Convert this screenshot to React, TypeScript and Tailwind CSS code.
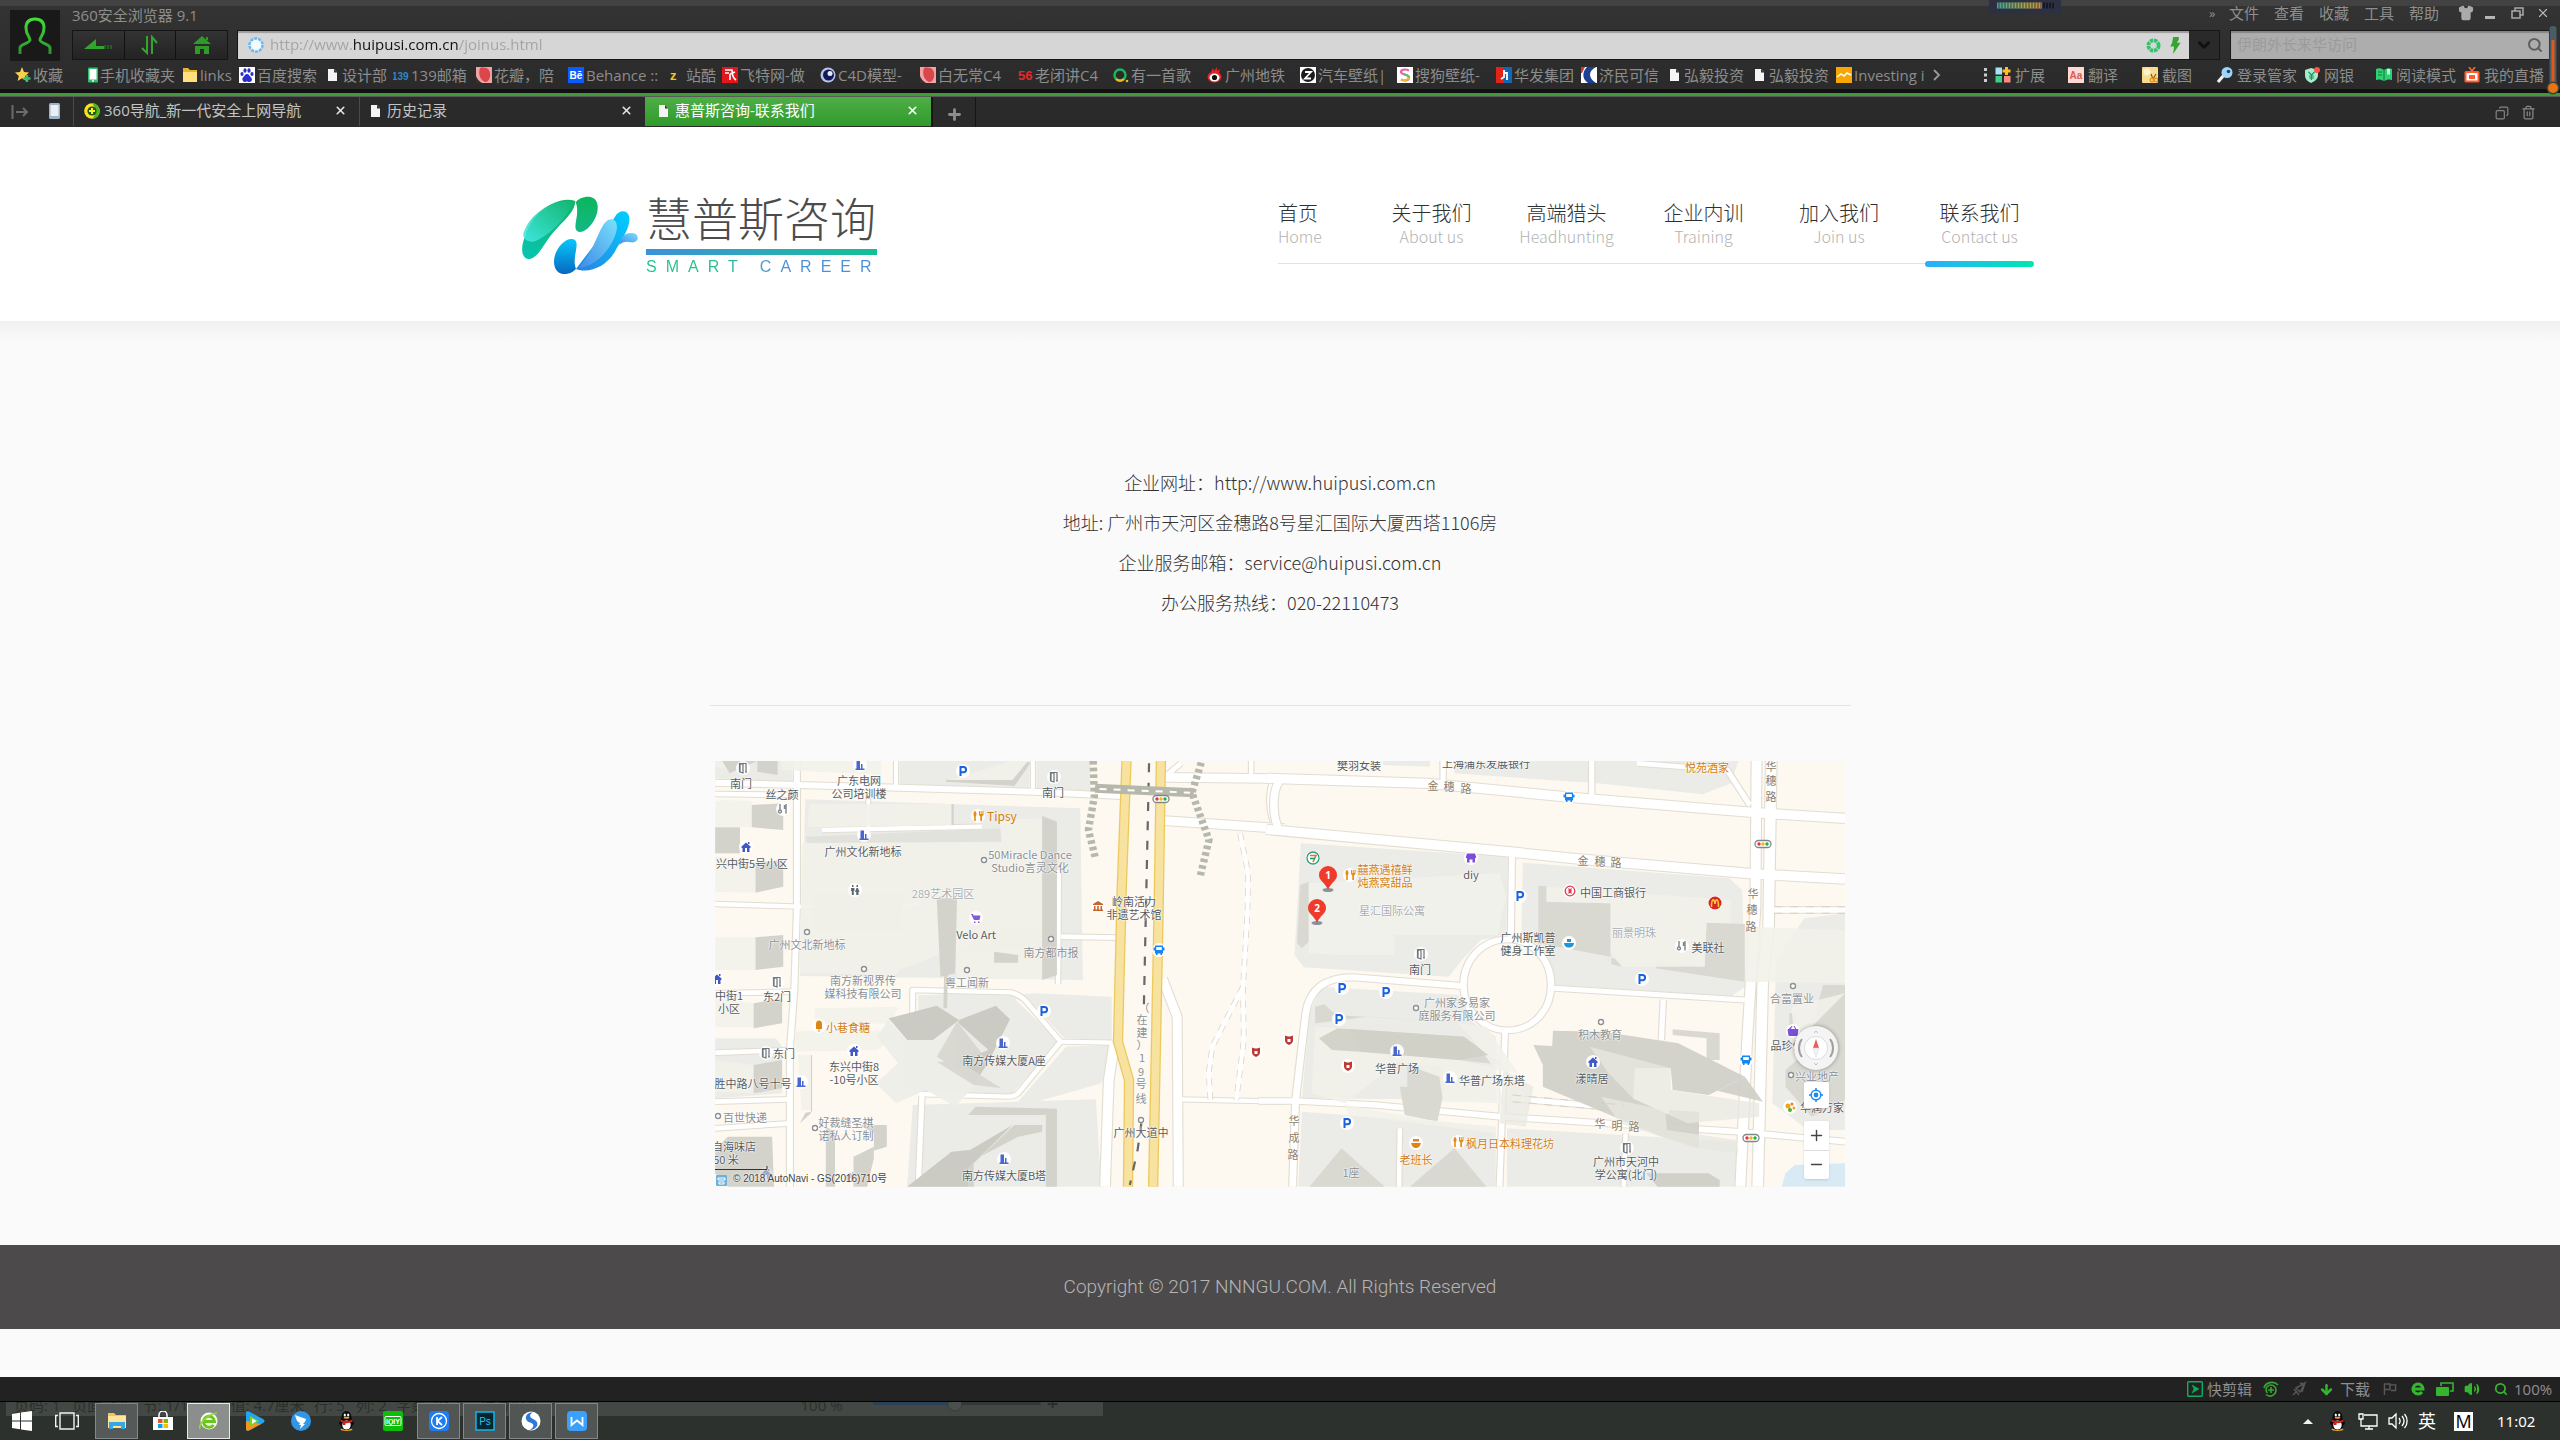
import React from "react";
import {
  ArrowDown,
  ChevronDown,
  Copy,
  Search,
  Shirt,
  Trash2,
  Volume2,
  X,
  Plus,
  Minus,
} from "lucide-react";

/* ------------------------------------------------------------------ */
/* Bookmark and tab icons                                              */
/* ------------------------------------------------------------------ */

function PageGlyph() {
  return (
    <svg viewBox="0 0 11 14" className="mr-[2px] h-[14px] w-[11px] shrink-0">
      <path d="M1 1h6l3 3.500V13H1z" fill="#f4f4f4" />
      <path d="M7 1v3.500h3z" fill="#333" />
    </svg>
  );
}

function PhoneGlyph() {
  return (
    <svg viewBox="0 0 10 16" className="h-4 w-[10px] shrink-0">
      <rect y="0.500" width="10" height="15" rx="1" fill="#2ebd6b" />
      <rect x="1.500" y="2" width="7" height="10.500" fill="#fff" />
      <circle cx="5" cy="14" r="0.900" fill="#fff" />
    </svg>
  );
}

function Glyph({ kind }: { kind: string }) {
  if (kind === "page") return <PageGlyph />;
  if (kind === "phone") return <PhoneGlyph />;
  return (
    <svg viewBox="0 0 16 16" className="h-4 w-4 shrink-0">
      {kind === "star" && (
        <>
          <path d="M7 0l2 5 5 .5-3.8 3.4L11.400 14 7 11.300 2.600 14l1.200-5.100L0 5.500 5 5z" fill="#fbd04e" />
          <path d="M12 8v7M8.500 11.500h7" stroke="#35c06b" strokeWidth="2.400" />
        </>
      )}
      {kind === "folder" && (
        <>
          <path d="M1 1h5l2 2h7v12H1z" fill="#e8b32e" />
          <path d="M1 5h14v10H1z" fill="#ffe07c" />
        </>
      )}
      {kind === "paw" && (
        <>
          <rect width="16" height="16" fill="#fff" />
          <g fill="#2b2fd0">
            <ellipse cx="3" cy="7" rx="1.600" ry="2.100" />
            <ellipse cx="6" cy="3.500" rx="1.600" ry="2.200" />
            <ellipse cx="10" cy="3.500" rx="1.600" ry="2.200" />
            <ellipse cx="13" cy="7" rx="1.600" ry="2.100" />
            <path d="M8 7c2 0 2.500 2 4 3.500S13 15 10.500 15 9 14.500 8 14.500 7 15 5.500 15 2.500 12 4 10.500 6 7 8 7z" />
          </g>
        </>
      )}
      {kind === "139" && (
        <text x="-1" y="13" fontSize="10" fontWeight="700" fill="#2f86c9" fontFamily="Liberation Sans">139</text>
      )}
      {kind === "petal" && (
        <>
          <rect width="16" height="16" fill="#f0a3a3" />
          <path d="M4 1c8-2 11 3 10 9-1 4-3 5-5 5-5-2-7-8-5-14z" fill="#d9464c" />
          <path d="M0 9v7h6C3 14 1 12 0 9z" fill="#3a2f30" />
        </>
      )}
      {kind === "be" && (
        <>
          <rect width="16" height="16" fill="#0d5bff" />
          <text x="1.500" y="12" fontSize="10" fontWeight="700" fill="#fff" fontFamily="Liberation Sans">Bē</text>
        </>
      )}
      {kind === "z" && (
        <text x="2" y="13" fontSize="13" fontWeight="700" fill="#f2c81c" fontFamily="Liberation Sans">z</text>
      )}
      {kind === "fei" && (
        <>
          <rect width="16" height="16" fill="#e3161b" />
          <path d="M3 3h7c0 5 1 8 4 10M8 7l5-2M8 7v6M3 6h4" stroke="#fff" strokeWidth="1.600" fill="none" />
        </>
      )}
      {kind === "c4d" && (
        <>
          <circle cx="8" cy="8" r="7.500" fill="#b9c4e6" />
          <circle cx="8.500" cy="8" r="5.500" fill="#10185c" />
          <circle cx="10" cy="6.500" r="2.500" fill="#e8ecf8" />
        </>
      )}
      {kind === "56" && (
        <text x="1" y="13" fontSize="13" fontWeight="700" fill="#e22a2a" fontFamily="Liberation Sans">56</text>
      )}
      {kind === "q" && (
        <>
          <circle cx="7" cy="8" r="5.500" fill="none" stroke="#1fb35a" strokeWidth="2.500" />
          <path d="M3 12a5.500 5.500 0 0 0 8 0" stroke="#f4b41b" strokeWidth="2.500" fill="none" />
          <circle cx="14" cy="14" r="1.300" fill="#f4b41b" />
        </>
      )}
      {kind === "weibo" && (
        <>
          <ellipse cx="7.500" cy="10" rx="7" ry="5.500" fill="#e0262b" />
          <path d="M4 5l2-4 1 3 3-4v4l3-2-1 4z" fill="#e0262b" />
          <ellipse cx="7.500" cy="10.500" rx="5" ry="4" fill="#fff" />
          <circle cx="7.500" cy="10.500" r="2.600" fill="#111" />
        </>
      )}
      {kind === "zcircle" && (
        <>
          <rect width="16" height="16" fill="#fff" />
          <circle cx="8" cy="8" r="7" fill="#1c1c1c" />
          <path d="M5 5h6l-6 6.500h6" stroke="#fff" strokeWidth="1.800" fill="none" />
        </>
      )}
      {kind === "sogou" && (
        <>
          <rect width="16" height="16" fill="#fff" />
          <path d="M12 3.500C9 2 4 2 4 5s8 2 8 5.500-5 3.500-8 2" stroke="#ef5da8" strokeWidth="2.200" fill="none" />
          <path d="M12 9.500c.5 4-5 4-8 3" stroke="#f3b52b" strokeWidth="2.200" fill="none" />
          <path d="M7 7.500c3 .5 5 1 5 3" stroke="#59c36a" strokeWidth="2.200" fill="none" />
        </>
      )}
      {kind === "huafa" && (
        <>
          <rect width="8" height="16" fill="#e2231a" />
          <rect x="8" width="8" height="16" fill="#1468b3" />
          <path d="M5 12l3-2V3M8 6h3v7" stroke="#fff" strokeWidth="1.800" fill="none" />
        </>
      )}
      {kind === "jimin" && (
        <>
          <rect width="16" height="16" fill="#fff" />
          <path d="M6 0h9c-8 4-8 11 0 16H7C1 12 1 5 6 0z" fill="#1d3f94" />
          <path d="M0 0h4L1 6H0z" fill="#d83a2a" />
        </>
      )}
      {kind === "invest" && (
        <>
          <rect width="16" height="16" fill="#f9a602" />
          <path d="M1 10l4-3 3 2 3-3 4 2" stroke="#fff" strokeWidth="1.500" fill="none" />
        </>
      )}
      {kind === "grid" && (
        <>
          <rect x="0.500" y="0.500" width="6.500" height="7" fill="#a7e2f8" />
          <path d="M11.500 0v8M7.500 4h8" stroke="#fbc01d" strokeWidth="3" />
          <rect x="0.500" y="9" width="6.500" height="6.500" fill="#3ccf88" />
          <rect x="9" y="9" width="6.500" height="6.500" fill="#ff8a80" />
        </>
      )}
      {kind === "aa" && (
        <>
          <rect width="16" height="16" fill="#ffd9d4" />
          <text x="1.500" y="12" fontSize="10" fontWeight="700" fill="#dc5a55" fontFamily="Liberation Sans">Aa</text>
        </>
      )}
      {kind === "cut" && (
        <>
          <rect width="16" height="16" rx="1" fill="#f8dc8f" />
          <circle cx="5" cy="5" r="3.500" fill="#fff3cc" />
          <path d="M9 7l2 5M14 7l-3 5" stroke="#7b5a1c" strokeWidth="1.200" />
          <circle cx="10" cy="13" r="1.800" fill="none" stroke="#ef9020" strokeWidth="1.400" />
          <circle cx="14" cy="13" r="1.800" fill="none" stroke="#ef9020" strokeWidth="1.400" />
        </>
      )}
      {kind === "key" && (
        <>
          <path d="M1 15l6-7" stroke="#f0f0f0" strokeWidth="3" />
          <circle cx="10" cy="5.500" r="5.500" fill="#9fd5fa" />
          <circle cx="11.500" cy="4.500" r="1.800" fill="#23445e" />
        </>
      )}
      {kind === "shield" && (
        <>
          <path d="M1 3l6-2 7 2v5c0 4-3 6-7 8-4-2-6-4-6-8z" fill="#a5ecca" />
          <path d="M4.500 5l3 3 3-3M7.500 8v5M5 9h5M5 11h5" stroke="#159a5c" strokeWidth="1.200" fill="none" />
          <circle cx="13" cy="3" r="3" fill="#ff5348" />
        </>
      )}
      {kind === "book" && (
        <>
          <path d="M0 2c3-1.500 5-1 8 1 3-2 5-2.500 8-1v11c-3-1-5-.5-8 1-3-1.500-5-2-8-1z" fill="#2fcf73" />
          <path d="M8 3v11M2 5h4M2 8h4" stroke="#15743d" strokeWidth="1" />
          <path d="M11 2v6l1.500-1L14 8V2z" fill="#c7f7dd" />
        </>
      )}
      {kind === "tv" && (
        <>
          <path d="M5 0l3 4 3-4" stroke="#ff6a2c" strokeWidth="1.600" fill="none" />
          <rect x="0.500" y="4" width="15" height="11.500" rx="1.500" fill="#ff5b2e" />
          <rect x="2.500" y="6" width="11" height="7.500" fill="#fff" />
          <rect x="5" y="8" width="6" height="4" fill="#ff5b2e" />
        </>
      )}
      {kind === "360" && (
        <>
          <circle cx="8" cy="8" r="7.800" fill="#fce21c" />
          <path d="M8 .2a7.800 7.800 0 0 1 0 15.600C12 13 12 4 8 .2z" fill="#52b51f" />
          <circle cx="8" cy="8" r="4.600" fill="#1e5a12" />
          <path d="M8 5v6M5 8h6" stroke="#fbea30" strokeWidth="2" />
        </>
      )}
    </svg>
  );
}

const bookmarks = [
  { t: "收藏", k: "star", w: "w-[73px]" },
  { t: "手机收藏夹", k: "phone", w: "w-[94px]" },
  { t: "links", k: "folder", w: "w-[57px]" },
  { t: "百度搜索", k: "paw", w: "w-[88px]" },
  { t: "设计部", k: "page", w: "w-[66px]" },
  { t: "139邮箱", k: "139", w: "w-[83px]" },
  { t: "花瓣，陪", k: "petal", w: "w-[92px]" },
  { t: "Behance ::", k: "be", w: "w-[100px]" },
  { t: "站酷", k: "z", w: "w-[54px]" },
  { t: "飞特网-做", k: "fei", w: "w-[98px]" },
  { t: "C4D模型-", k: "c4d", w: "w-[100px]" },
  { t: "白无常C4", k: "petal", w: "w-[97px]" },
  { t: "老闭讲C4", k: "56", w: "w-[96px]" },
  { t: "有一首歌", k: "q", w: "w-[94px]" },
  { t: "广州地铁", k: "weibo", w: "w-[93px]" },
  { t: "汽车壁纸|", k: "zcircle", w: "w-[97px]" },
  { t: "搜狗壁纸-", k: "sogou", w: "w-[99px]" },
  { t: "华发集团", k: "huafa", w: "w-[85px]" },
  { t: "济民可信", k: "jimin", w: "w-[88px]" },
  { t: "弘毅投资", k: "page", w: "w-[85px]" },
  { t: "弘毅投资", k: "page", w: "w-[82px]" },
  { t: "Investing i", k: "invest", w: "w-[97px]" },
];

const extensions = [
  { t: "扩展", k: "grid", w: "w-[73px]" },
  { t: "翻译", k: "aa", w: "w-[74px]" },
  { t: "截图", k: "cut", w: "w-[75px]" },
  { t: "登录管家", k: "key", w: "w-[87px]" },
  { t: "网银", k: "shield", w: "w-[72px]" },
  { t: "阅读模式", k: "book", w: "w-[88px]" },
  { t: "我的直播", k: "tv", w: "w-[84px]" },
];

/* ------------------------------------------------------------------ */
/* Browser chrome                                                      */
/* ------------------------------------------------------------------ */

function TopBar() {
  return (
    <div className="flex h-[62px] pl-[10px] pr-[10px]">
      <button aria-label="账户" className="mt-[10px] flex h-[51px] w-[50px] shrink-0 items-center justify-center bg-[#191919]">
        <svg viewBox="0 0 34 38" className="h-[38px] w-[34px]" fill="none" stroke="url(#avatarGreen)" strokeWidth="3">
          <defs>
            <linearGradient id="avatarGreen" x1="0" y1="0" x2="0" y2="1">
              <stop offset="0" stopColor="#3fe03a" />
              <stop offset="1" stopColor="#2f8f2c" />
            </linearGradient>
          </defs>
          <path d="M2 37v-6c0-4 9-4 10-8 0-3-4-5-4-12C8 5 11 2 17 2s9 3 9 9c0 7-4 9-4 12 1 4 10 4 10 8v6" />
        </svg>
      </button>
      <div className="min-w-0 flex-1 pl-3">
        <div className="flex h-[30px] items-center justify-between text-[15px] text-[#8e8e8e]">
          <span className="leading-5">360安全浏览器 9.1</span>
          <div className="flex h-5 items-center pb-1 leading-5">
            <span className="w-5 text-[13px]">»</span>
            <button className="w-[45px] text-left">文件</button>
            <button className="w-[45px] text-left">查看</button>
            <button className="w-[45px] text-left">收藏</button>
            <button className="w-[45px] text-left">工具</button>
            <button className="w-[49px] text-left">帮助</button>
            <button aria-label="皮肤" className="w-[27px]"><Shirt size={16} fill="#aaa" color="#aaa" /></button>
            <button aria-label="最小化" className="mt-2 mr-4 h-[3px] w-[10px] bg-[#b5b5b5]" />
            <button aria-label="还原" className="w-[25px]">
              <svg viewBox="0 0 13 12" className="h-3 w-[13px]" fill="none" stroke="#aaa" strokeWidth="1.500">
                <path d="M4 4V1h8v7H9M1 4h8v7H1z" />
              </svg>
            </button>
            <button aria-label="关闭"><X size={14} color="#bbb" /></button>
          </div>
        </div>
        <div className="flex h-[30px] items-center">
          <div className="mr-[9px] flex h-[30px] w-[156px] shrink-0 divide-x divide-[#111] border border-[#151515] bg-linear-to-b from-[#333] to-[#232323]">
            <button aria-label="后退" className="flex flex-1 items-center justify-center">
              <svg viewBox="0 0 28 12" className="h-3 w-7"><path d="M0 10L12 0v7h8v3z" fill="#33a52c" /><path d="M21 10v-4M24 10v-4M27 10v-4" stroke="#2a6f28" strokeWidth="1.500" /></svg>
            </button>
            <button aria-label="刷新" className="flex flex-1 items-center justify-center">
              <svg viewBox="0 0 18 20" className="h-5 w-[18px]" fill="none" stroke="#33a52c" strokeWidth="2"><path d="M6 1v17L1 13M11 19V2l5 6" /></svg>
            </button>
            <button aria-label="主页" className="flex flex-1 items-center justify-center">
              <svg viewBox="0 0 20 18" className="h-[18px] w-5"><path d="M10 0l9 8H1zM3 10h14v8h-5v-5H8v5H3zM14 1h2v3h-2z" fill="#2f9a2a" /></svg>
            </button>
          </div>
          <div className="flex h-[30px] min-w-0 flex-1 items-center border border-[#161616] bg-[#d6d6d6] pl-[10px] shadow-[inset_0_2px_1px_#9c9c9c]">
            <svg viewBox="0 0 16 16" className="mr-[6px] h-4 w-4 shrink-0"><circle cx="8" cy="8" r="6.500" fill="#f4fbff" stroke="#6bb8f0" strokeWidth="2.500" strokeDasharray="3 1" /></svg>
            <input
              aria-label="地址"
              defaultValue="http://www.huipusi.com.cn/joinus.html"
              className="h-6 min-w-0 flex-1 bg-[linear-gradient(90deg,#a3a3a3_83px,#111_83px,#111_189px,#a3a3a3_189px)] bg-clip-text pb-[2px] text-[15px] text-transparent outline-none"
            />
            <svg viewBox="0 0 16 16" className="mr-2 h-[15px] w-[15px] shrink-0"><circle cx="8" cy="8" r="5.500" fill="none" stroke="#2fc56c" strokeWidth="4" strokeDasharray="3.500 0.800" /></svg>
            <svg viewBox="0 0 12 18" className="mr-2 h-[17px] w-3 shrink-0"><path d="M4 0h6v3L8 6h4L4 18l1-8H1l2-4z" fill="#35a52f" /></svg>
            <button aria-label="展开" className="flex h-7 w-[30px] shrink-0 items-center justify-center bg-[#2a2a2a]">
              <ChevronDown size={18} strokeWidth={4} color="#111" />
            </button>
          </div>
          <div className="ml-[10px] flex h-[30px] w-[320px] shrink-0 items-center border border-[#1a1a1a] bg-[#adadad] px-[6px] shadow-[inset_0_2px_1px_#858585]">
            <input aria-label="搜索" placeholder="伊朗外长来华访问" className="min-w-0 flex-1 pb-[2px] text-[15px] outline-none placeholder:text-[#9b9b9b]" />
            <button aria-label="搜索"><Search size={16} strokeWidth={3} color="#5f5f5f" /></button>
          </div>
        </div>
      </div>
    </div>
  );
}

function Tab({ icon, title, active }: { icon: string; title: string; active?: boolean }) {
  return (
    <div
      role="tab"
      aria-selected={!!active}
      className={
        active
          ? "flex h-[29px] w-[286px] items-center bg-linear-to-b from-[#4fae47] to-[#2f9a2b] pr-3 pb-[2px] pl-[13px] text-white"
          : "flex h-[29px] w-[286px] items-center border-l border-[#4a4a4a] pr-3 pb-[2px] pl-[10px] text-[#c4c4c4]"
      }
    >
      <Glyph kind={icon} />
      <span className="ml-1 flex-1 truncate text-[15px]">{title}</span>
      <button aria-label="关闭标签"><X size={13} strokeWidth={3} color={active ? "#fff" : "#e6e6e6"} /></button>
    </div>
  );
}

function BrowserChrome() {
  return (
    <div className="relative h-[127px] shrink-0 overflow-hidden bg-linear-to-b from-[#343434] to-[#262626]">
      <div className="h-[6px] bg-[#424242]" />
      <div className="-mt-[6px]"><TopBar /></div>
      <div className="flex h-[31px] items-center justify-between border-b-4 border-[#111] pr-3 pb-[2px] pl-[15px] text-[15px] leading-5 whitespace-nowrap text-[#8c8c8c]">
        <nav aria-label="书签" className="flex items-center">
          {bookmarks.map((b, i) => (
            <a key={i} href="#" className={`flex shrink-0 items-center gap-[2px] ${b.w}`}>
              <Glyph kind={b.k} />
              {b.t}
            </a>
          ))}
          <svg viewBox="0 0 8 12" className="h-3 w-2" fill="none" stroke="#999" strokeWidth="1.800"><path d="M1 1l5 5-5 5" /></svg>
        </nav>
        <div className="flex items-center">
          <svg viewBox="0 0 3 14" className="mr-2 h-[14px] w-[3px]" fill="#ccc"><path d="M0 0h3v3H0zM0 5.500h3v3H0zM0 11h3v3H0z" /></svg>
          {extensions.map((b) => (
            <button key={b.t} className={`flex shrink-0 items-center gap-1 ${b.w}`}>
              <Glyph kind={b.k} />
              {b.t}
            </button>
          ))}
        </div>
      </div>
      <div className="h-1 border-b border-[#5a5a5a] bg-[#3d9a37]" />
      <div className="flex h-[30px] items-start bg-[#2a2a2a]">
        <button aria-label="侧栏" className="mt-2 ml-[11px] w-[38px]">
          <svg viewBox="0 0 18 14" className="h-[14px] w-[18px]" fill="none" stroke="#6c6c6c" strokeWidth="2"><path d="M1.500 0v14M5 7h11M12 3l4 4-4 4" /></svg>
        </button>
        <button aria-label="手机" className="mt-[6px] w-[24px]">
          <svg viewBox="0 0 11 16" className="h-4 w-[11px]"><rect width="11" height="16" rx="1.500" fill="#9fb3c8" /><rect x="1.500" y="2" width="8" height="11" fill="#e9eff5" /></svg>
        </button>
        <div role="tablist" className="flex">
          <Tab icon="360" title="360导航_新一代安全上网导航" />
          <Tab icon="page" title="历史记录" />
          <Tab icon="page" title="惠普斯咨询-联系我们" active />
        </div>
        <button aria-label="新标签" className="flex h-[30px] w-[45px] items-center justify-center border-r border-l-2 border-[#161616] pt-1">
          <Plus size={17} strokeWidth={4} color="#8e8e8e" />
        </button>
        <div className="ml-auto flex gap-3 pt-2 pr-6">
          <button aria-label="恢复标签"><Copy size={14} strokeWidth={2} color="#858585" className="rotate-90" /></button>
          <button aria-label="清除"><Trash2 size={15} strokeWidth={2} color="#858585" /></button>
        </div>
      </div>
      <svg viewBox="0 0 72 14" className="absolute top-0 right-[499px] h-[14px] w-[72px]">
        <rect y="-4" width="72" height="18" rx="3" fill="#2c3042" />
        <defs>
          <linearGradient id="meter"><stop offset="0" stopColor="#3fa8a0" /><stop offset="0.600" stopColor="#a5a94c" /><stop offset="1" stopColor="#d18a3a" /></linearGradient>
        </defs>
        <path d="M8 2.500h45v6H8z" fill="url(#meter)" />
        <path d="M9.500 5.500h44" stroke="#3a4038" strokeWidth="6" strokeDasharray="1 2" />
        <path d="M54 5.500h12" stroke="#171a26" strokeWidth="6" strokeDasharray="2 1" />
      </svg>
      <svg viewBox="0 0 14 72" className="absolute top-[25px] right-0 h-[72px] w-[14px]">
        <rect x="3.500" y="1" width="7" height="62" rx="3" fill="#4a5c66" />
        <path d="M7 15v48" stroke="#e2571e" strokeWidth="3" />
        <circle cx="7" cy="63" r="6.500" fill="#3b3f44" />
        <circle cx="7" cy="63" r="5" fill="#e8760f" />
      </svg>
    </div>
  );
}

/* ------------------------------------------------------------------ */
/* Site header                                                         */
/* ------------------------------------------------------------------ */

function Logo() {
  return (
    <a href="#" aria-label="慧普斯咨询" className="flex items-start">
      <svg viewBox="60 75 360 243" className="h-[81px] w-[120px]">
        <defs>
          <linearGradient id="lg1" x1="0.800" y1="0" x2="0.200" y2="1"><stop offset="0" stopColor="#0fb467" /><stop offset="1" stopColor="#08c3ae" /></linearGradient>
          <linearGradient id="lg2" x1="1" y1="0" x2="0" y2="1"><stop offset="0" stopColor="#12b673" /><stop offset="1" stopColor="#48ece8" /></linearGradient>
          <linearGradient id="lg3" x1="0" y1="0" x2="0" y2="1"><stop offset="0" stopColor="#0bb65c" /><stop offset="1" stopColor="#14b787" /></linearGradient>
          <linearGradient id="lg4" x1="0" y1="0" x2="0" y2="1"><stop offset="0" stopColor="#06c8fb" /><stop offset="1" stopColor="#0668c2" /></linearGradient>
          <linearGradient id="lg5" x1="1" y1="0" x2="0" y2="1"><stop offset="0" stopColor="#00d0ff" /><stop offset="1" stopColor="#2a80e0" /></linearGradient>
          <linearGradient id="lg6" x1="1" y1="0" x2="0" y2="1"><stop offset="0" stopColor="#79e0fc" /><stop offset="1" stopColor="#3f8be6" /></linearGradient>
        </defs>
        <path d="M226 93C170 75 95 130 75 200C60 235 65 268 88 267C120 262 130 215 175 170C200 145 225 120 226 93Z" fill="url(#lg1)" />
        <path d="M222 94C170 82 90 125 70 190C66 210 90 218 105 214C150 195 205 140 222 94Z" fill="url(#lg2)" opacity="0.850" />
        <path d="M227 97C240 78 290 68 293 108C296 145 262 188 238 186C210 180 243 135 227 97Z" fill="url(#lg3)" />
        <path d="M228 296C215 315 165 325 162 278C160 240 195 203 217 207C247 212 213 260 228 296Z" fill="url(#lg4)" />
        <path d="M228 297C275 315 330 280 350 235C375 195 395 160 386 135C380 118 355 120 345 140C320 180 270 240 228 297Z" fill="url(#lg5)" />
        <path d="M236 294C290 290 340 230 350 180C355 150 335 140 318 155C295 175 290 230 236 294Z" fill="url(#lg6)" />
        <path d="M358 224C362 195 385 182 408 192C420 205 410 220 392 217C378 213 368 216 358 224Z" fill="url(#lg6)" />
      </svg>
      <span className="ml-[6px] flex w-[231px] flex-col">
        <span className="mb-3 text-[46px] leading-[42px] font-light whitespace-nowrap text-[#4c4c4c]">慧普斯咨询</span>
        <span className="h-[6px] bg-linear-to-r from-[#3d90d8] to-[#12bf95]" />
        <span className="mt-[2px] bg-linear-to-r from-[#22c091] from-30% to-[#4a90d9] to-60% bg-clip-text font-['Liberation_Sans',sans-serif] text-base leading-5 tracking-[9px] whitespace-nowrap text-transparent">
          SMART CAREER
        </span>
      </span>
    </a>
  );
}

const navItems = [
  { zh: "首页", en: "Home", w: "w-[86px] text-left" },
  { zh: "关于我们", en: "About us", w: "w-[135px]" },
  { zh: "高端猎头", en: "Headhunting", w: "w-[135px]" },
  { zh: "企业内训", en: "Training", w: "w-[139px]" },
  { zh: "加入我们", en: "Join us", w: "w-[132px]" },
  { zh: "联系我们", en: "Contact us", w: "ml-5 w-[109px]" },
];

function SiteHeader() {
  return (
    <header className="h-[194px] bg-white">
      <div className="mx-auto flex max-w-[1520px] items-start justify-between pt-[68px] pr-[6px]">
        <Logo />
        <nav className="relative mt-1 flex h-[65px] border-b border-[#e2e2e2] text-center font-light">
          {navItems.map((n) => (
            <a key={n.zh} href="#" className={`block ${n.w}`}>
              <span className="block text-xl leading-7 text-[#2f2f2f]">{n.zh}</span>
              <span className="block text-base leading-[18px] text-[#b3b3b3]">{n.en}</span>
            </a>
          ))}
          <span className="absolute right-0 -bottom-1 h-[6px] w-[109px] rounded-[3px] bg-linear-to-r from-[#2cacfb] to-[#00e8ae]" />
        </nav>
      </div>
    </header>
  );
}

/* ------------------------------------------------------------------ */
/* Map                                                                 */
/* ------------------------------------------------------------------ */

type Sheet = "w" | "e";
const sheets = {
  w: { dx: -15, sx: 0.3699 },
  e: { dx: 555, sx: 0.3763 },
};
const at = (s: Sheet, x: number, y: number) => ({
  x: Math.round(sheets[s].dx + x * sheets[s].sx),
  y: Math.round(y / 3 - 21),
});

type RoadSpec = [string, number];

const westRoads: RoadSpec[] = [
  ["M262 63V500L255 750L243 930V1340", 16],
  ["M41 128L540 143L900 155L1140 168", 18],
  ["M41 162L262 165", 14],
  ["M530 63V143", 11],
  ["M900 63V155", 11],
  ["M455 165V265", 10],
  ["M41 492L270 500L545 502L590 490", 13],
  ["M330 270L762 260", 13],
  ["M970 390L968 732", 12],
  ["M975 590L1130 593", 14],
  ["M575 1060V750L840 757Q870 765 890 795L975 905L1115 908", 13],
  ["M975 905L860 1060Q850 1070 830 1070L590 1062", 13],
  ["M600 1065L590 1340", 14],
  ["M41 938L250 930", 14],
  ["M41 1085L243 1078", 14],
  ["M41 1165L243 1150", 14],
  ["M41 760L255 755", 14],
  ["M1120 910L1105 1020L1095 1340", 26],
  ["M1250 715L1290 830L1293 1340", 24],
  ["M1300 1078L1580 1085", 13],
  ["M1255 112L1580 116", 26],
  ["M1255 242L1580 266", 26],
  ["M1257 110L1300 70", 14],
  ["M1490 60V112", 12],
  ["M1555 120C1535 150 1540 230 1560 262", 18],
];

const westTracks = [
  "M1460 280L1482 400L1480 520L1468 740L1470 900L1450 1080",
  "M1468 740L1385 920L1375 1000L1380 1080",
];

const eastRoads: RoadSpec[] = [
  ["M25 125C5 150 5 240 28 275", 20],
  ["M460 63V125", 14],
  ["M855 63V165", 14],
  ["M975 70L1215 90L1275 195", 14],
  ["M643 350L640 590", 16],
  ["M510 738L220 712C150 712 105 745 95 820L68 1080L60 1340", 18],
  ["M755 745L1262 780", 15],
  ["M1045 780L1040 900", 14],
  ["M-30 1083H70L280 1095L610 1130L1240 1175L1528 1205", 17],
  ["M625 870L610 1340", 15],
  ["M345 1165L343 1340", 12],
  ["M945 1180L940 1340", 12],
  ["M640 1075L940 1105", 16],
  ["M1335 510H1528", 16],
  ["M1293 63L1290 500L1268 900L1250 1340", 26],
  ["M1332 63L1325 560L1310 700L1296 1340", 28],
  ["M-10 115L420 130L800 172L1290 218L1528 235", 28],
  ["M-10 268L640 336L820 357L1290 402L1528 417", 28],
  ["M630 598C700 598 747 660 747 735C747 810 700 871 630 871C565 871 514 810 514 735C514 660 565 598 630 598", 17],
];

function Roads({ specs }: { specs: RoadSpec[] }) {
  return (
    <g fill="none" strokeLinejoin="round">
      {specs.map(([d, w]) => (
        <path key={"c" + d} d={d} stroke="#e2ddd1" strokeWidth={w + 6} />
      ))}
      {specs.map(([d, w]) => (
        <path key={d} d={d} stroke="#fff" strokeWidth={w} />
      ))}
    </g>
  );
}

function Shapes({ fill, points, opacity }: { fill: string; points: string[]; opacity?: number }) {
  return (
    <g fill={fill} opacity={opacity}>
      {points.map((p) => (
        <polygon key={p} points={p} />
      ))}
    </g>
  );
}

function WestSheet() {
  return (
    <g transform="translate(-15 -21) scale(0.3699 0.33333)">
      <Shapes
        fill="#ebebe7"
        points={[
          "41,63 250,63 250,125 41,115",
          "540,63 890,63 890,145 540,135",
          "910,63 1055,63 1055,158 910,150",
          "285,178 1028,205 1035,720 270,708",
          "590,760 850,765 905,760 1113,770 1113,900 985,895 890,780",
          "590,765 840,765 970,905 840,1065 590,1060",
          "990,920 1115,915 1085,1030 910,1085 860,1085",
          "575,1095 1070,1078 1085,1340 560,1340",
          "41,895 205,895 222,920 222,1060 41,1075",
        ]}
      />
      <Roads specs={westRoads} />
      <g fill="none" stroke="#d9d2c4" strokeWidth="15" strokeDasharray="22 20">
        {westTracks.map((d) => (
          <path key={d} d={d} />
        ))}
      </g>
      <g fill="none" stroke="#fff" strokeWidth="11">
        {westTracks.map((d) => (
          <path key={d} d={d} />
        ))}
      </g>
      <Shapes
        fill="#e2e2dd"
        points={["285,290 815,265 815,308 290,308", "305,460 545,460 545,572 305,572", "695,640 940,620 920,560 840,560"]}
      />
      <Shapes
        fill="#f2f2eb"
        opacity={0.9}
        points={[
          "41,63 155,63 100,95 41,80",
          "220,63 490,63 490,105 220,90",
          "60,180 140,183 140,262 41,262 41,185",
          "41,350 150,362 150,458 41,455",
          "41,592 150,592 150,690 41,690",
          "41,775 145,790 145,862 41,862",
          "41,960 145,975 145,1060 41,1055",
          "295,192 680,192 680,255 545,258 290,262",
          "275,310 815,305 810,240 925,235 925,718 700,715 655,640 540,690 530,705 270,700",
          "660,125 840,63 890,63 840,140",
          "265,945 300,945 300,1110 275,1110",
          "255,875 340,870 540,875 480,930 260,935",
          "310,805 535,800 520,850 310,855",
        ]}
      />
      <Shapes
        fill="#d3d3cb"
        points={[
          "60,63 155,63 80,100",
          "155,63 210,63 210,105 155,95",
          "140,195 225,190 225,270 140,262",
          "41,262 108,262 108,340 41,340",
          "150,368 225,360 225,440 150,458",
          "150,592 225,585 225,680 150,690",
          "145,790 222,775 222,850 145,865",
          "145,975 222,960 222,1045 145,1060",
          "925,228 965,245 965,705 925,720",
          "640,475 695,475 690,700 650,710",
          "660,700 670,700 668,805 658,805",
          "680,192 686,192 686,255 680,255",
          "795,635 860,645 860,668 795,668",
          "845,120 885,65 893,70 850,138 665,125 665,120",
          "270,1150 300,1120 300,945 303,945 303,1115 285,1118",
          "340,1160 365,1175 365,1340 340,1340",
          "430,1155 505,1155 505,1220 470,1232 470,1180",
          "415,1250 470,1220 470,1255 452,1340 415,1340",
          "75,1190 195,1190 200,1340 75,1340 41,1300 41,1230",
          "745,1100 965,1106 965,1340 935,1340 935,1125 725,1125",
          "725,1285 850,1155 925,1155 925,1175 860,1190 740,1260 740,1340 725,1340",
        ]}
      />
      <Shapes
        fill="#cbcbc3"
        points={[
          "510,835 640,797 700,840 690,850 630,900 560,900",
          "700,840 800,797 838,838 780,965 740,1035 690,980 690,880",
          "560,1340 680,1235 730,1230 845,1155 725,1285 725,1340",
        ]}
      />
      <Shapes fill="#eeeee8" opacity={0.92} points={["478,890 510,840 560,900 630,900 695,845 780,930 700,965 815,1045 740,1040 690,1100 610,1050 530,1090 475,1030 535,970"]} />
      <Shapes fill="#d4d4cd" opacity={0.8} points={["640,965 700,965 815,1045 740,1035", "695,845 780,965 690,985 640,950"]} />
      <g fill="none">
        <path d="M1153 63L1140 450L1130 905L1160 1020L1157 1340" stroke="#edc95d" strokeWidth="28" />
        <path d="M1153 63L1140 450L1130 905L1160 1020L1157 1340" stroke="#f8e2a0" strokeWidth="21" />
        <path d="M1246 63L1240 500L1225 1340" stroke="#edc95d" strokeWidth="28" />
        <path d="M1246 63L1240 500L1225 1340" stroke="#f8e2a0" strokeWidth="21" />
        <path d="M1214 70L1203 640L1200 800" stroke="#66696c" strokeWidth="6" strokeDasharray="27 31" />
        <path d="M1193 1150L1183 1230L1162 1335" stroke="#66696c" strokeWidth="6" strokeDasharray="27 31" />
        <path d="M1063 63L1066 170L1050 270L1068 350" stroke="#b7b8ac" strokeWidth="20" strokeDasharray="11 9" />
        <path d="M1355 68L1330 158L1376 300L1352 410" stroke="#b7b8ac" strokeWidth="20" strokeDasharray="11 9" />
        <path d="M1068 145L1335 158" stroke="#b7b8ac" strokeWidth="27" />
        <path d="M1080 147L1325 158" stroke="#fff" strokeWidth="6" strokeDasharray="19 19" />
      </g>
    </g>
  );
}

function EastSheet() {
  return (
    <g transform="translate(555 -21) scale(0.3763 0.33333)">
      <Shapes
        fill="#ebebe7"
        points={[
          "82,310 632,350 628,585 560,600 510,660 475,710 90,682 65,645",
          "672,368 1220,415 1255,450 1262,740 1225,770 755,735 740,650 690,590 668,580",
          "490,63 1245,63 1225,130 1150,163 870,130 490,100",
          "300,63 425,63 425,80 300,75",
          "135,740 500,765 530,840 600,890 600,1080 85,1075 105,820",
          "85,1115 600,1160 600,1340 75,1340",
          "630,1165 1240,1205 1235,1340 630,1340",
          "1420,535 1528,520 1528,1170 1430,1170 1335,1090 1345,660",
        ]}
      />
      <Shapes fill="#d8eaf3" points={["1395,1275 1528,1270 1528,1340 1360,1340 1370,1300"]} />
      <Roads specs={eastRoads} />
      <Shapes
        fill="#d9d9d2"
        points={[
          "80,435 103,425 103,605 85,625 72,610",
          "713,438 735,438 735,485 905,490 905,650 713,610",
          "1160,548 1262,552 1262,725 1025,685 1025,665 1155,680",
          "907,655 935,660 933,680 907,672",
          "120,800 145,793 175,825 530,850 260,830 120,850",
          "130,895 180,865 515,890 620,975 500,960 240,935 165,930",
          "345,1040 365,1040 365,970 460,980 460,1065 445,1145 358,1125",
          "105,1340 190,1225 305,1340",
          "372,1340 490,1225 575,1340",
          "1380,820 1400,820 1400,870 1380,870",
          "1470,735 1528,735 1528,1080 1440,1130 1370,1040 1370,990 1420,940",
          "1070,868 1195,880 1195,960 1160,960 1160,895 1070,885",
        ]}
      />
      <Shapes
        fill="#f2f2eb"
        opacity={0.9}
        points={[
          "103,430 610,400 628,470 605,585 330,585 330,645 190,645 103,640",
          "735,440 1225,480 1225,550 1160,548 1155,680 935,680 905,640 905,490 735,485",
          "1262,560 1528,570 1528,730 1262,725",
          "120,860 210,865 240,935 500,960 600,985 620,1090 460,1085 450,1010 340,965 200,1090 110,1060",
          "500,850 575,860 660,1000 600,990 540,900",
          "200,1095 420,1140 600,1160 600,1180 210,1125",
          "1385,800 1528,760 1440,860 1400,960",
        ]}
      />
      <Shapes
        fill="#cfcfc7"
        opacity={0.9}
        points={[
          "752,872 885,875 1085,910 1262,1010 1165,1065 1070,1050 1065,985 970,985 965,1075 1110,1150 1140,1225 1030,1185 725,1040 725,975 700,915 750,918",
          "1060,1110 1140,1115 1140,1225 1055,1165",
          "1000,1300 1165,1300 1195,1320 1195,1340 1030,1340",
          "1165,1065 1262,1010 1310,1085 1180,1050",
          "130,895 180,865 515,890 580,945 500,960 240,935 165,930",
        ]}
      />
      <Shapes fill="#e9e9e2" opacity={0.75} points={["850,920 1065,985 1065,1050 1300,1090 1300,1130 1110,1150 965,1075 900,1000", "880,1070 1050,1110 1055,1170 1240,1200 1245,1240 1130,1225 930,1150", "620,990 700,1040 680,1160 610,1150"]} />
      <g stroke="#d9d2c4" strokeWidth="3" strokeDasharray="22 20">
        <path d="M1340 500H1528M1340 520H1528M645 1065L940 1095M645 1085L860 1107" />
      </g>
    </g>
  );
}

type PoiSpec = [Sheet, number, number, string];
const pois: PoiSpec[] = [
  ["w", 115, 84, "door"], ["w", 225, 206, "hair"], ["w", 432, 74, "bldg"], ["w", 712, 92, "park"], ["w", 957, 111, "door"],
  ["w", 752, 227, "food"], ["w", 443, 285, "bldg"], ["w", 125, 321, "house"], ["w", 767, 359, "dot"], ["w", 419, 450, "wc"],
  ["w", 746, 535, "cart"], ["w", 290, 576, "dot"], ["w", 950, 598, "dot"], ["w", 1075, 499, "museum"], ["w", 1242, 630, "bus"],
  ["w", 443, 686, "dot"], ["w", 722, 691, "dot"], ["w", 209, 725, "door"], ["w", 46, 717, "house"], ["w", 929, 813, "park"],
  ["w", 322, 857, "ice"], ["w", 415, 932, "house"], ["w", 818, 910, "bldg"], ["w", 179, 938, "door"], ["w", 274, 1027, "bldg"],
  ["w", 50, 1129, "dot"], ["w", 310, 1163, "dot"], ["w", 823, 1256, "bldg"], ["w", 1502, 936, "shield"], ["w", 1246, 178, "light"],
  ["w", 1193, 1139, "dot"], ["w", 178, 1303, "faint"], ["w", 405, 1312, "faint"],
  ["e", 794, 172, "bus"], ["e", 1310, 312, "light"], ["e", 534, 354, "shop"], ["e", 213, 405, "food"], ["e", 664, 467, "park"],
  ["e", 798, 453, "bank"], ["e", 1183, 489, "mc"], ["e", 114, 355, "seven"], ["e", 402, 643, "door"], ["e", 794, 609, "boat"],
  ["e", 1094, 618, "hair"], ["e", 989, 718, "park"], ["e", 192, 745, "park"], ["e", 309, 755, "park"], ["e", 387, 805, "dot"],
  ["e", 184, 837, "park"], ["e", 51, 900, "shield"], ["e", 879, 847, "dot"], ["e", 1390, 737, "dot"], ["e", 1390, 872, "basket"],
  ["e", 338, 934, "bldg"], ["e", 207, 978, "shield"], ["e", 478, 1015, "bldg"], ["e", 858, 966, "house"], ["e", 1265, 959, "bus"],
  ["e", 1384, 1004, "dot"], ["e", 1383, 1100, "fruit"], ["e", 1277, 1193, "light"], ["e", 205, 1150, "park"], ["e", 387, 1208, "bowl"],
  ["e", 499, 1205, "food"], ["e", 950, 1223, "door"],
];

function Poi({ spec }: { spec: PoiSpec }) {
  const [s, px, py, k] = spec;
  const { x, y } = at(s, px, py);
  return (
    <g transform={`translate(${x} ${y})`} opacity={k === "faint" ? 0.35 : 1}>
      {k !== "light" && k !== "dot" && <circle r="7" fill="#fff" opacity="0.9" />}
      {k === "dot" && <circle r="2.500" fill="#fff" stroke="#8c9094" strokeWidth="1.400" />}
      {k === "park" && <path d="M-2.500 5V-4H.5A2.500 2.500 0 0 1 .5 1.200H-2.500" fill="none" stroke="#1d62dd" strokeWidth="2" />}
      {k === "bus" && <path d="M-4-4.500h8v8H3V5H1.500V3.500h-3V5H-3V3.500h-1zM-2.800-3v3h5.600v-3zM-5.500-2.500h1.500v3h-1.500zM4-2.500h1.500v3H4z" fill="#1585f2" fillRule="evenodd" />}
      {k === "door" && <path d="M-3.500 4v-8.500h6.500V4M0-4.500V5l-3-1v-7.500zM2 4H4" fill="none" stroke="#6f767c" strokeWidth="1.200" />}
      {k === "bldg" && <path d="M-3.500-4.500h3.500v8.500h-3.500zM1-1h1.500V4H1zM-4.500 3.500h9V5h-9z" fill="#4a66cf" />}
      {(k === "house" || k === "faint") && <path d="M-4.500-.5L0-4.500l4.500 4V1h-1v4H1V1h-2v4h-2.500V1h-1zM2-5h1.500v2H2z" fill="#4058c8" />}
      {k === "food" && <path d="M-3-5a2 3 0 0 1 .8 5.200V5h-1.600V.2A2 3 0 0 1-3-5zM1-5h1v3h.7v-3h1v3h.8v-3h1V-1L4 .5V5H2.300V.5L1-1z" fill="#ea8a10" />}
      {k === "light" && (
        <>
          <rect x="-8" y="-3.500" width="16" height="7" rx="3.500" fill="#fff" stroke="#7d8a83" strokeWidth="1.300" />
          <circle cx="-4" r="1.700" fill="#e6304f" /><circle r="1.700" fill="#f3b414" /><circle cx="4" r="1.700" fill="#1fae55" />
        </>
      )}
      {k === "wc" && <path d="M-4-2h3.500v3h-.7v4h-2V1H-4zM1.500-2H3L4.500 2H3.500v3H1.200V2H0zM-3-5h1.500v2H-3zM1.500-5H3v2H1.500z" fill="#5c6a74" />}
      {k === "cart" && <path d="M-5-4h2l.5 1.500H4.500L3.500 2H-2zM-2 3.500h1.500V5H-2zM2 3.500h1.500V5H2z" fill="#8359e0" />}
      {k === "museum" && <path d="M0-5l5 3v1H-5v-1zM-4 0h1.500v3.500H-4zM-.8 0h1.600v3.500H-.8zM2.500 0H4v3.500H2.500zM-5 3.500H5V5H-5z" fill="#c9642c" />}
      {k === "ice" && <path d="M-3-2a3 3.500 0 0 1 6 0v5H-3zM-.5 3h1v3h-1z" fill="#e08514" />}
      {k === "shield" && <path d="M-4-4.500l3 1h2l3-1v5C4 3 2 4 0 5-2 4-4 3-4 .5zM-1.500-1h3v3h-3z" fill="#bb3a36" fillRule="evenodd" />}
      {k === "shop" && <path d="M-4-4.500h8l1 3v1.500H4V4.500H1.500V1.500h-3v3H-4V0h-1v-1.500z" fill="#7a4edb" />}
      {k === "basket" && <path d="M-5-1.500H-3L-1-5M5-1.500H-5l1 6h8zM3-1.500L1-5" fill="#7a4edb" stroke="#7a4edb" />}
      {k === "bank" && <><circle r="4.800" fill="none" stroke="#e33b53" strokeWidth="1.300" /><path d="M-2-2h1.500V2H-2M2-2H.5V2H2M-2 0h1.500M2 0H.5" fill="none" stroke="#e33b53" /></>}
      {k === "mc" && <><circle r="6.500" fill="#d9252a" /><path d="M-3.500 4C-3.500-5-.8-5 0 1 .8-5 3.500-5 3.500 4" fill="none" stroke="#fbcf2b" strokeWidth="1.500" /></>}
      {k === "seven" && <><circle r="6" fill="#fff" stroke="#2d9d7c" strokeWidth="1.300" /><path d="M-3-2.500h6L0 4" fill="none" stroke="#e2703a" strokeWidth="1.600" /><path d="M-3 .5h5" stroke="#1e9c62" strokeWidth="1.600" /></>}
      {k === "boat" && <path d="M-5 0H5C4.500 3.500 3 4.500 0 4.500S-4.500 3.500-5 0zM-2-1h4v-3h-4z" fill="#2394d2" />}
      {k === "bowl" && <path d="M-5 0H5C4 4 2 5 0 5S-4 4-5 0zM-3-4h6v2.500h-6z" fill="#e08514" />}
      {k === "hair" && <path d="M-3-5V1M-3 1a1.500 1.500 0 1 1-.1 0M3-5v9.500M1.500-4v4" fill="none" stroke="#7c858c" strokeWidth="1.400" />}
      {k === "fruit" && <><circle cx="-2" cy="-1" r="2.500" fill="#f0a417" /><circle cx="2" cy="-3" r="1.500" fill="#ef7a1b" /><circle cx="0" cy="3" r="2" fill="#53ad2f" /><circle cx="4" cy="1" r="1.500" fill="#f0a417" /></>}
    </g>
  );
}

function Pin({ n, s, x, y }: { n: number; s: Sheet; x: number; y: number }) {
  const p = at(s, x, y);
  return (
    <g transform={`translate(${p.x} ${p.y})`}>
      <ellipse cy="14" rx="5.500" ry="2" fill="#6c7d8c" opacity="0.8" />
      <path d="M0 14C-3 6-9 5-9-1A9 9 0 0 1 9-1C9 5 3 6 0 14Z" fill="#ef3b2c" />
      <text y="3" textAnchor="middle" fontSize="10" fontWeight="700" fill="#fff" fontFamily="Noto Sans">{n}</text>
    </g>
  );
}

const dark = "text-[#555b61]";
const mid = "text-[#8a8f94]";
const pale = "text-[#a9adb0]";
const orange = "text-[#d27c10]";
const brown = "text-[#8d7d6c]";

type LabelSpec = [Sheet, number, number, string, string];
const labels: LabelSpec[] = [
  ["w", 111, 129, "南门", dark], ["w", 223, 162, "丝之颜", dark], ["w", 430, 141, "广东电网\n公司培训楼", dark], ["w", 953, 155, "南门", dark],
  ["w", 441, 333, "广州文化新地标", dark], ["w", 140, 370, "兴中街5号小区", dark], ["w", 893, 362, "50Miracle Dance\nStudio言灵文化", mid],
  ["w", 658, 459, "289艺术园区", pale], ["w", 745, 582, "Velo Art", dark], ["w", 290, 613, "广州文北新地标", mid], ["w", 948, 635, "南方都市报", mid],
  ["w", 1174, 504, "岭南活力\n非遗艺术馆", dark], ["w", 441, 741, "南方新视界传\n媒科技有限公司", mid], ["w", 721, 727, "粤工闻新", mid], ["w", 207, 769, "东2门", dark],
  ["w", 78, 785, "中街1\n小区", dark], ["w", 400, 861, "小巷食糖", orange], ["w", 415, 1000, "东兴中街8\n-10号小区", dark], ["w", 821, 960, "南方传媒大厦A座", dark],
  ["w", 227, 939, "东门", dark], ["w", 142, 1030, "胜中路八号十号", dark], ["w", 121, 1132, "百世快递", mid], ["w", 395, 1166, "好裁缝圣祺\n诺私人订制", mid],
  ["w", 92, 1218, "自海味店", dark], ["w", 71, 1257, "50 米", dark], ["w", 823, 1306, "南方传媒大厦B塔", dark], ["w", 1192, 1177, "广州大道中", dark],
  ["w", 1200, 802, "（", mid], ["w", 1196, 838, "在", mid], ["w", 1196, 876, "建", mid], ["w", 1196, 912, "）", mid], ["w", 1196, 950, "1", mid], ["w", 1193, 994, "9", mid], ["w", 1193, 1030, "号", mid], ["w", 1191, 1073, "线", mid],
  ["e", 236, 76, "樊羽女装", dark], ["e", 575, 70, "上海浦东发展银行", dark], ["e", 1160, 81, "悦苑酒家", orange],
  ["e", 305, 407, "囍燕遇禧鲜\n炖燕窝甜品", orange], ["e", 533, 403, "diy", dark], ["e", 325, 510, "星汇国际公寓", pale], ["e", 911, 456, "中国工商银行", dark],
  ["e", 968, 577, "丽景明珠", pale], ["e", 686, 611, "广州斯凯普\n健身工作室", dark], ["e", 1163, 621, "美联社", dark], ["e", 399, 688, "南门", dark],
  ["e", 498, 808, "广州家多易家\n庭服务有限公司", mid], ["e", 876, 883, "积木教育", mid], ["e", 1387, 773, "合富置业", mid], ["e", 1375, 916, "品珍优", dark],
  ["e", 337, 983, "华普广场", dark], ["e", 591, 1019, "华普广场东塔", dark], ["e", 855, 1015, "漾晴居", dark], ["e", 1453, 1007, "兴业地产", mid],
  ["e", 1467, 1102, "华润万家", dark], ["e", 388, 1256, "老班长", orange], ["e", 638, 1210, "枫月日本料理花坊", orange], ["e", 215, 1295, "1座", mid],
  ["e", 946, 1285, "广州市天河中\n学公寓(北门)", dark],
  ["e", 434, 135, "金", brown], ["e", 477, 137, "穗", brown], ["e", 522, 143, "路", brown],
  ["e", 832, 359, "金", brown], ["e", 876, 362, "穗", brown], ["e", 920, 366, "路", brown],
  ["e", 1331, 78, "华", brown], ["e", 1331, 120, "穗", brown], ["e", 1331, 169, "路", brown],
  ["e", 1284, 458, "华", brown], ["e", 1281, 507, "穗", brown], ["e", 1279, 557, "路", brown],
  ["e", 65, 1140, "华", brown], ["e", 63, 1190, "成", brown], ["e", 61, 1241, "路", brown],
  ["e", 878, 1149, "华", brown], ["e", 922, 1154, "明", brown], ["e", 967, 1157, "路", brown],
];

function MapPanel() {
  return (
    <section aria-label="地图" className="relative mx-auto mt-[55px] h-[426px] w-full max-w-[1130px] overflow-hidden bg-[#fdf9f1]">
      <svg viewBox="0 0 1130 426" className="h-[426px] w-[1130px]">
        <WestSheet />
        <EastSheet />
        {pois.map((p, i) => (
          <Poi key={i} spec={p} />
        ))}
        <Pin n={2} s="e" x={124} y={508} />
        <Pin n={1} s="e" x={153} y={408} />
        <path d="M0 408.500H52V405" fill="none" stroke="#333" />
        <g>
          <rect x="1" y="414" width="11" height="11" rx="1" fill="#6bb2df" />
          <path d="M3 417h7v2H3v-2zM4 421h5v2H4z" fill="none" stroke="#fff" />
        </g>
      </svg>
      {labels.map(([s, lx, ly, text, tone], i) => {
        const p = at(s, lx, ly);
        return (
          <span
            key={i}
            className={`absolute -translate-x-1/2 -translate-y-1/2 text-center text-[11px] leading-[13px] whitespace-pre [text-shadow:0_0_2px_#fff,0_0_2px_#fff,0_0_1px_#fff] ${tone}`}
            style={{ left: p.x, top: p.y }}
          >
            {text}
          </span>
        );
      })}
      <span className="absolute top-[47px] left-[272px] text-[12px] leading-4 text-[#d27c10] [text-shadow:0_0_2px_#fff]">
        Tipsy
      </span>
      <span className="absolute bottom-0 left-[18px] font-['Liberation_Sans','Noto_Sans_CJK_SC',sans-serif] text-[10px] leading-4 text-[#444] [text-shadow:0_0_2px_#fff,0_0_2px_#fff]">
        © 2018 AutoNavi - GS(2016)710号
      </span>
      <div className="absolute right-[7px] bottom-2 flex w-11 flex-col items-center">
        <svg viewBox="0 0 44 44" className="h-11 w-11 rounded-full shadow-[0_0_4px_rgba(0,0,0,0.35)]">
          <circle cx="22" cy="22" r="22" fill="#f4f4f4" />
          <circle cx="22" cy="22" r="11.500" fill="#fff" stroke="#dcdcdc" />
          <path d="M22 13l3 9h-6z" fill="#ef5b5b" />
          <path d="M22 31l3-9h-6z" fill="#f3f3f3" stroke="#d5d5d5" strokeWidth="0.500" />
          <path d="M8 13c-4 5-4 13 0 18M36 13c4 5 4 13 0 18" fill="none" stroke="#9f9f9f" strokeWidth="2" />
          <path d="M20 7l2-2 2 2M20 37l2 2 2-2" fill="none" stroke="#c2c2c2" />
        </svg>
        <button aria-label="定位" className="mt-3 flex h-[26px] w-[25px] items-center justify-center rounded-[2px] bg-white shadow">
          <svg viewBox="0 0 14 14" className="h-[14px] w-[14px]"><circle cx="7" cy="7" r="4.800" fill="none" stroke="#1b8cf0" strokeWidth="1.500" /><circle cx="7" cy="7" r="2.400" fill="#1b8cf0" /><path d="M7 0v3M7 11v3M0 7h3M11 7h3" stroke="#1b8cf0" strokeWidth="1.500" /></svg>
        </button>
        <div className="mt-[13px] flex h-[58px] w-[25px] flex-col divide-y divide-[#dcdcdc] rounded-[2px] bg-white shadow">
          <button aria-label="放大" className="flex flex-1 items-center justify-center"><Plus size={17} color="#444" /></button>
          <button aria-label="缩小" className="flex flex-1 items-center justify-center"><Minus size={17} color="#444" /></button>
        </div>
      </div>
    </section>
  );
}

/* ------------------------------------------------------------------ */
/* Status bar and taskbar                                              */
/* ------------------------------------------------------------------ */

function StatusBar() {
  return (
    <div className="flex h-[25px] shrink-0 items-center justify-end border-b border-black bg-[#222] pr-[6px] text-[15px] leading-5 text-[#8f8f8f]">
      <button className="flex w-[76px] items-center gap-1">
        <svg viewBox="0 0 16 16" className="h-4 w-4" fill="none" stroke="#0fae5c" strokeWidth="1.400"><rect x="0.700" y="0.700" width="14.600" height="14.600" rx="1" /><path d="M5 4l7 4-7 4 2-4z" fill="#0fae5c" strokeWidth="0.500" /></svg>
        快剪辑
      </button>
      <svg viewBox="0 0 16 16" className="mr-3 h-4 w-4" fill="none" stroke="#36a830" strokeWidth="1.600"><path d="M3 13.500a6 6 0 0 0 10-4.500 5 5 0 1 0-10 0c0 1 .5 2 1.500 3M1 7a8 7 0 0 1 14-3M8 6v6M5 9h6" /></svg>
      <svg viewBox="0 0 16 16" className="mr-3 h-4 w-4" fill="none" stroke="#555" strokeWidth="1.500"><path d="M14 2L5 7l4 4zM14 2l-3 9M3 8l5 6M2 14l4-4M9 2l4 1" /></svg>
      <button className="flex w-[63px] items-center gap-[6px]"><ArrowDown size={15} strokeWidth={4} color="#36b52f" />下载</button>
      <svg viewBox="0 0 16 14" className="mr-[13px] h-[13px] w-4" fill="none" stroke="#5a5a5a" strokeWidth="1.500"><path d="M2 13V1h6v6H2M8 2h6v6H9" /></svg>
      <svg viewBox="0 0 14 14" className="mr-[11px] h-[14px] w-[14px]" fill="none" stroke="#36b52f" strokeWidth="3"><path d="M2 7h10A5 5 0 1 0 11 10" /></svg>
      <svg viewBox="0 0 18 14" className="mr-[10px] h-[14px] w-[18px]"><path d="M5 4V1h12v8h-3" fill="none" stroke="#36b52f" strokeWidth="1.600" /><rect y="5" width="13" height="9" rx="1" fill="#36b52f" /></svg>
      <button aria-label="声音" className="mr-[14px]"><Volume2 size={16} fill="#36b52f" color="#36b52f" /></button>
      <Search size={14} strokeWidth={3} color="#36b52f" />
      <span className="ml-[6px] w-10 whitespace-nowrap">100%</span>
    </div>
  );
}

function Penguin() {
  return (
    <svg viewBox="0 0 17 20" className="h-5 w-[17px]">
      <ellipse cx="8.500" cy="18.500" rx="6" ry="1.500" fill="#f2a71b" />
      <path d="M1 13c0-3 2-4 2.500-6C3.500 3 5.500 0 8.500 0s5 3 5 7c.5 2 2.500 3 2.500 6l-1.500 1c0 3-3 5-6 5s-6-2-6-5z" fill="#0c0c0c" />
      <ellipse cx="8.500" cy="14" rx="4.200" ry="4.500" fill="#fff" />
      <ellipse cx="6.800" cy="4" rx="1.100" ry="1.600" fill="#fff" /><ellipse cx="10.200" cy="4" rx="1.100" ry="1.600" fill="#fff" />
      <ellipse cx="8.500" cy="6.700" rx="3" ry="1" fill="#f3a11c" />
      <path d="M2.500 8.500c4 2 8 2 12 0v2.200c-3 1.500-5 1.500-7 1.500V14H5v-2.500l-2.500-1z" fill="#e01b1b" />
    </svg>
  );
}

function AppIcon({ k }: { k: string }) {
  if (k === "qq") return <Penguin />;
  return (
    <svg viewBox="0 0 20 20" className="h-5 w-5">
      {k === "win" && <path d="M0 3l8-1.200V9.500H0zM9 1.600L20 0v9.500H9zM0 10.500h8v7.700L0 17zM9 10.500h11V20L9 18.400z" fill="#fff" />}
      {k === "explorer" && <><path d="M1 2h6l2 2h10v13H1z" fill="#f3c551" /><path d="M1 5h18v12H1z" fill="#ffe59c" /><path d="M2 18v-7h16v7h-4v-3H6v3z" fill="#35a8e8" /></>}
      {k === "store" && <><path d="M6 6V4a4 4 0 0 1 8 0v2" fill="none" stroke="#fff" strokeWidth="1.500" /><path d="M0 6h20v13H0z" fill="#fff" /><path d="M5 8h4.500v4H5z" fill="#f0502a" /><path d="M10.500 8H15v4h-4.500z" fill="#7fba00" /><path d="M5 13h4.500v4H5z" fill="#00a4ef" /><path d="M10.500 13H15v4h-4.500z" fill="#ffb900" /></>}
      {k === "360se" && <><circle cx="10" cy="10" r="8.500" fill="#f4fbe9" /><path d="M4.500 10.500h11A5.500 5.500 0 1 0 14.500 14" fill="none" stroke="#6cc51f" strokeWidth="3" /><path d="M1 18C-1 13 9 3 18 2" fill="none" stroke="#8ad93a" strokeWidth="1.600" /></>}
      {k === "video" && <><path d="M1 2c0-2 2-2 4-1l13 7c2 1 2 3 0 4L5 19c-2 1-4 1-4-1z" fill="#22a6f2" /><path d="M1 10v8c0 2 2 2 4 1l11-6z" fill="#f7941d" /><path d="M5 5l9 5-9 5.500z" fill="#7dd321" /><path d="M7 7.500l4.500 2.500L7 13z" fill="#fff" /></>}
      {k === "ding" && <><circle cx="10" cy="10" r="10" fill="#2f96e8" /><path d="M4 4l11 4c0 2-2 4-3 5h2l-5 5 1-4H8l1-2C6 11 5 8 4 4z" fill="#fff" /></>}
      {k === "iqiyi" && <><rect width="20" height="20" rx="2" fill="#0bbe06" /><rect x="2" y="5.500" width="16" height="9" rx="1" fill="none" stroke="#fff" /><text x="10" y="13" textAnchor="middle" fontSize="7" fontWeight="700" fill="#fff" fontFamily="Liberation Sans">iQIY</text></>}
      {k === "k" && <><rect width="20" height="20" rx="4" fill="#1e7df2" /><circle cx="10" cy="10" r="7.500" fill="none" stroke="#fff" strokeWidth="1.300" /><path d="M8 6v8M13 6l-4.500 4L13 14" fill="none" stroke="#fff" strokeWidth="1.800" /></>}
      {k === "ps" && <><rect x="1" y="1" width="18" height="18" fill="#06262f" stroke="#12b7ea" strokeWidth="1.500" /><text x="10" y="14" textAnchor="middle" fontSize="10" fill="#20c4f5" fontFamily="Liberation Sans">Ps</text></>}
      {k === "s" && <><circle cx="10" cy="10" r="9.500" fill="#fff" /><path d="M12 1C3 2 3 10 9 11.500S12 18 8 19c9 0 11-8 5-10.500S9 3 12 1z" fill="#2f78d8" /></>}
      {k === "w" && <><rect width="20" height="20" rx="4" fill="#3ba0fb" /><path d="M4.500 6v8l5.500-4.500 5.500 4.500V6" fill="none" stroke="#fff" strokeWidth="1.800" /></>}
    </svg>
  );
}

const apps = [
  { k: "explorer", box: "border border-[#83888a] bg-[#555a59]" },
  { k: "store", box: "" },
  { k: "360se", box: "border border-[#e8e8e8] bg-[#8b8e8d]" },
  { k: "video", box: "" },
  { k: "ding", box: "" },
  { k: "qq", box: "" },
  { k: "iqiyi", box: "" },
  { k: "k", box: "border border-[#83888a] bg-[#515655]" },
  { k: "ps", box: "border border-[#83888a] bg-[#515655]" },
  { k: "s", box: "border border-[#83888a] bg-[#515655]" },
  { k: "w", box: "border border-[#83888a] bg-[#515655]" },
];

function Taskbar() {
  return (
    <div className="relative flex h-[38px] shrink-0 items-center overflow-hidden bg-[#2c312e]">
      <div className="absolute top-0 left-[6px] flex h-[14px] w-[1097px] items-end overflow-hidden bg-[#434844] pl-2 text-[15px] leading-[22px] whitespace-nowrap text-[#2b302d]">
        <span className="w-[58px]">页码: 1</span>
        <span className="w-[71px]">页面: 1/5</span>
        <span className="w-[58px]">节: 1/1</span>
        <span className="w-[113px]">设置值: 4.7厘米</span>
        <span className="w-[42px]">行: 5</span>
        <span className="w-[41px]">列: 2</span>
        <span className="w-[84px]">字数: 817</span>
        <span className="w-[321px]">拼写检查</span>
        <span className="w-[73px]">100 %</span>
        <svg viewBox="0 0 230 14" className="h-[14px] w-[230px]">
          <path d="M0 1.500h80" stroke="#2b4259" strokeWidth="3" /><path d="M80 1.500h88" stroke="#333835" strokeWidth="3" />
          <circle cx="82" cy="2" r="7" fill="#4b504c" stroke="#363b38" /><path d="M175 2h10M180 0v6" stroke="#2b302d" strokeWidth="2" />
        </svg>
      </div>
      <button aria-label="开始" className="relative flex w-11 justify-center"><AppIcon k="win" /></button>
      <button aria-label="任务视图" className="relative mr-[5px] flex w-[46px] justify-center">
        <svg viewBox="0 0 24 18" className="h-[18px] w-6" fill="none" stroke="#f2f2f2" strokeWidth="1.400"><path d="M5 1h14v16H5zM3 3.500H.7v11H3M21 3.500h2.300v11H21" /></svg>
      </button>
      <div className="relative flex gap-[3px]">
        {apps.map((a) => (
          <button key={a.k} aria-label={a.k} className={`flex h-9 w-[43px] items-center justify-center ${a.box}`}>
            <AppIcon k={a.k} />
          </button>
        ))}
      </div>
      <div className="relative ml-auto flex items-center pr-[23px] text-white">
        <svg viewBox="0 0 10 5" className="mr-4 h-[5px] w-[10px]"><path d="M5 0l5 5H0z" fill="#f2f2f2" /></svg>
        <Penguin />
        <svg viewBox="0 0 20 17" className="ml-3 h-[17px] w-5" fill="none" stroke="#fff" strokeWidth="1.300"><path d="M6 2h13v11H3V8M11 13v3M7 16h8M1 1h4v5H1zM3 6v3" /></svg>
        <svg viewBox="0 0 20 18" className="ml-[10px] h-[18px] w-5" fill="none" stroke="#fff" strokeWidth="1.300"><path d="M1 6h3l4-4v14l-4-4H1zM11 6c1.500 2 1.500 4 0 6M14 4c2.500 3 2.500 7 0 10M16.500 2c3.500 4 3.500 10 0 14" /></svg>
        <span className="ml-[10px] text-lg leading-6">英</span>
        <span className="ml-[18px] flex h-[19px] w-[19px] items-center justify-center bg-white text-lg leading-none text-black">M</span>
        <time className="ml-6 w-10 font-['Noto_Sans',sans-serif] text-[15px] leading-6 whitespace-nowrap">11:02</time>
      </div>
    </div>
  );
}

/* ------------------------------------------------------------------ */

export default function App() {
  return (
    <div className="flex min-h-screen flex-col bg-[#fafafa] font-['Open_Sans','Noto_Sans_CJK_SC',sans-serif]">
      <BrowserChrome />
      <div className="flex-1 font-['Noto_Sans_CJK_SC',sans-serif]">
        <SiteHeader />
        <div className="h-[22px] bg-linear-to-b from-[#f0f0f0] to-[#fafafa]" />
        <main className="pt-[119px] font-normal">
          <address className="text-center text-lg leading-10 font-light text-[#333] not-italic">
            <p>企业网址：http://www.huipusi.com.cn</p>
            <p>地址: 广州市天河区金穗路8号星汇国际大厦西塔1106房</p>
            <p>企业服务邮箱：service@huipusi.com.cn</p>
            <p>办公服务热线：020-22110473</p>
          </address>
          <hr className="mx-auto mt-[83px] max-w-[1141px] border-[#e4e4e4]" />
          <MapPanel />
        </main>
        <footer className="mt-[58px] flex h-[84px] items-center justify-center bg-[#4d4a4b] font-['Roboto',sans-serif] text-[19px] font-light text-[#b5b5b5]">
          Copyright © 2017 NNNGU.COM. All Rights Reserved
        </footer>
      </div>
      <StatusBar />
      <Taskbar />
    </div>
  );
}
